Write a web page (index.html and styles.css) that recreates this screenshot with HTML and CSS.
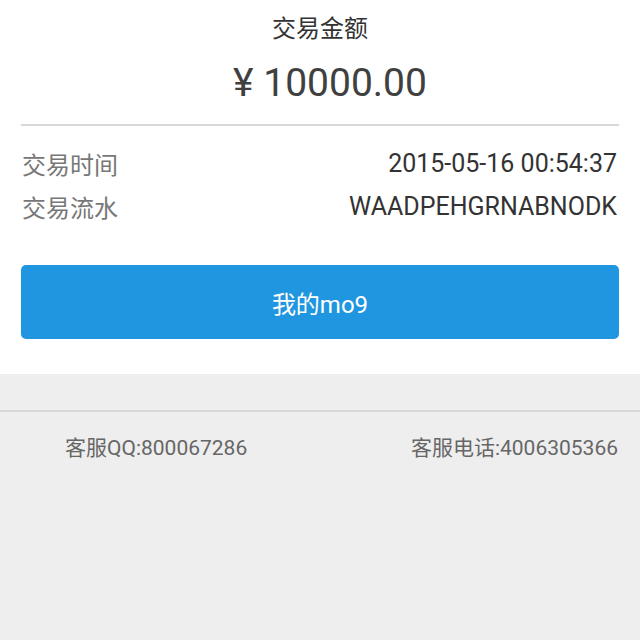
FILE: index.html
```html
<!DOCTYPE html>
<html lang="zh-CN">
<head>
  <meta charset="UTF-8">
  <meta name="viewport" content="width=device-width, initial-scale=1.0">
  <title>交易详情</title>
  <link rel="stylesheet" href="styles.css">
</head>
<body>
  <div class="detalle">
    <div class="titulo">交易金额</div>
    <div class="monto">¥ 10000.00</div>
    <div class="info">
      <div class="fila">
        <span class="etiqueta">交易时间</span>
        <span class="valor">2015-05-16 00:54:37</span>
      </div>
      <div class="fila">
        <span class="etiqueta">交易流水</span>
        <span class="valor">WAADPEHGRNABNODK</span>
      </div>
    </div>
    <button class="btn-mo9">我的mo9</button>
  </div>
  <div class="pie">
    <span>客服QQ:800067286</span>
    <span>客服电话:4006305366</span>
  </div>
</body>
</html>
```

FILE: styles.css
```css
body {
  margin: 0;
  background-color: #eeeeee;
  font-family: Roboto, "Noto Sans CJK SC", sans-serif;
  color: #333;
}
.detalle {
  background-color: #fff;
  padding: 0 21px 35px 21px;
  text-align: center;
}
.titulo {
  font-size: 24px;
  line-height: 30px;
  padding-top: 14px;
}
.monto {
  font-size: 39px;
  line-height: 50px;
  color: #404040;
  padding: 14px 0 16px 20px;
  border-bottom: 2px solid #d8d8d8;
}
.info {
  padding-top: 16px;
}
.fila {
  display: flex;
  justify-content: space-between;
  align-items: center;
  height: 43px;
  padding: 0 2px 0 1px;
}
.etiqueta {
  font-size: 24px;
  color: #777;
}
.valor {
  font-size: 25px;
  color: #333;
}
.btn-mo9 {
  display: block;
  width: 100%;
  height: 74px;
  margin-top: 37px;
  border: none;
  border-radius: 5px;
  background-color: #2196e0;
  color: white;
  font-family: inherit;
  font-size: 24px;
  cursor: pointer;
}
.pie {
  margin-top: 36px;
  border-top: 2px solid #d8d8d8;
  display: flex;
  justify-content: space-between;
  padding: 19px 22px 0 65px;
  font-size: 21px;
  color: #666;
}
```
